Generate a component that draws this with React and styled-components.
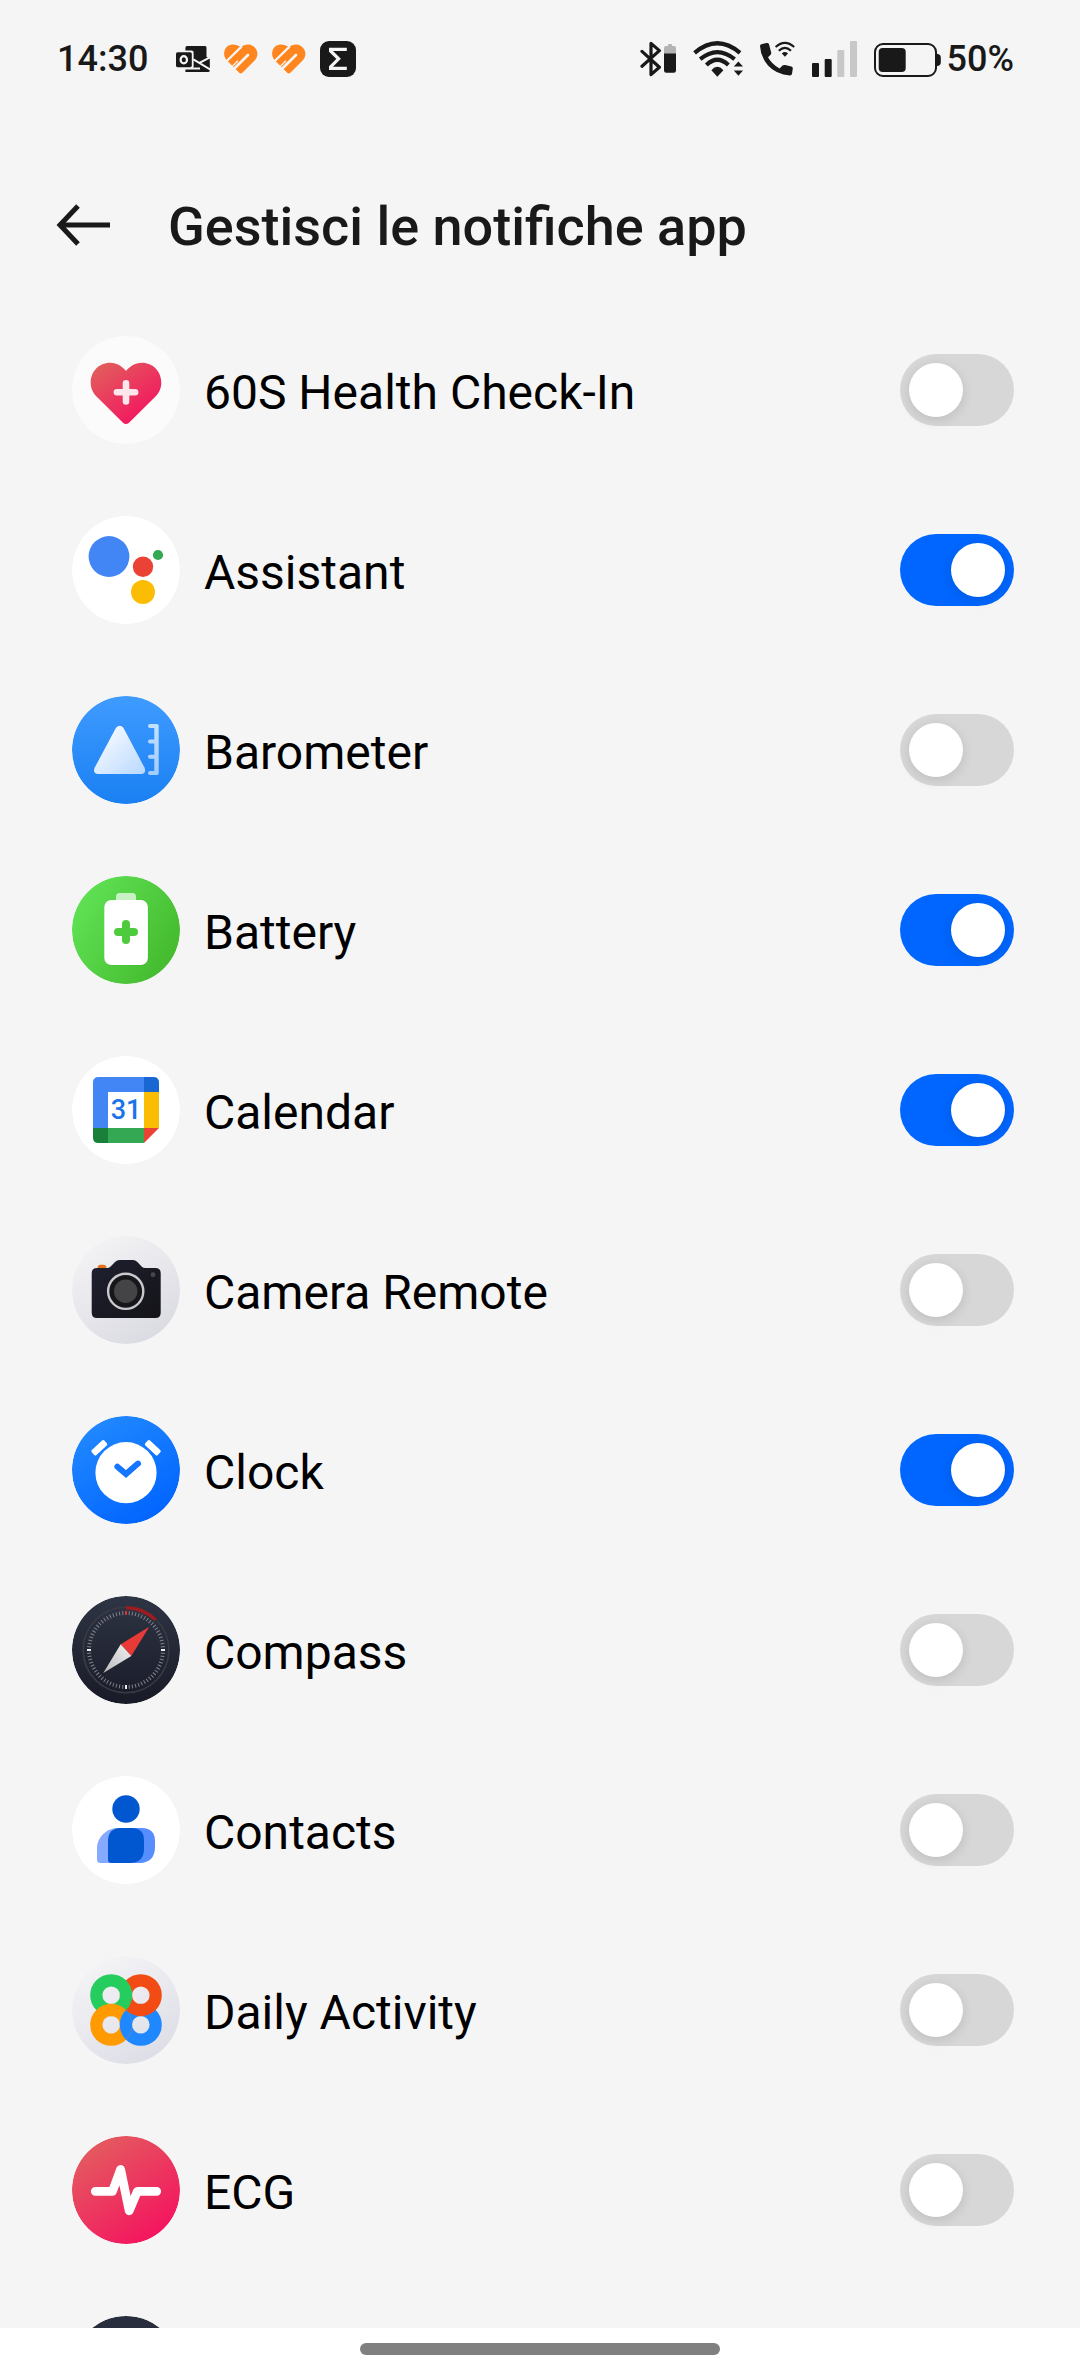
import { useState } from "react"
import styled, { createGlobalStyle } from "styled-components"

const GlobalStyle = createGlobalStyle`
*{
    box-sizing: border-box;
}

body{
    margin: 0;
    background: #f5f5f5;
    font-family: Roboto, "Noto Sans", sans-serif;
}
`

const Screen = styled.div`
height: 100vh;
display: flex;
flex-direction: column;
background: #f5f5f5;
`

const StyledStatusBar = styled.div`
display: flex;
justify-content: space-between;
align-items: center;
height: 118px;
padding: 0 66px 0 57px;
flex-shrink: 0;
color: #191919;
font-size: 36px;
font-weight: 500;
`

const StatusGroup = styled.div`
display: flex;
align-items: center;
gap: ${(props) => props.$gap}px;
`

const StyledHeader = styled.header`
display: flex;
align-items: center;
gap: 58px;
height: 182px;
padding: 32px 56px 0;
flex-shrink: 0;
`

const BackButton = styled.button`
display: flex;
padding: 0;
border: 0;
background: none;
color: #191919;
cursor: pointer;
`

const Title = styled.h1`
margin: 0;
padding-top: 2px;
color: #191919;
font-size: 54px;
font-weight: 500;
`

const AppList = styled.ul`
flex: 1;
min-height: 0;
margin: 0;
padding: 0;
list-style: none;
overflow-y: auto;
scrollbar-width: none;
`

const AppRow = styled.li`
display: flex;
align-items: center;
gap: 24px;
height: 180px;
padding: 0 66px 0 72px;
`

const AppIcon = styled.svg`
width: 108px;
height: 108px;
flex-shrink: 0;
border-radius: 50%;
`

const AppName = styled.label`
flex: 1;
padding-top: 4px;
color: #000;
font-size: 48px;
`

const Switch = styled.input`
appearance: none;
width: 114px;
height: 72px;
margin: 0;
padding: 9px;
flex-shrink: 0;
border-radius: 36px;
background: #d7d7d7;
cursor: pointer;

&::before{
    content: "";
    display: block;
    width: 54px;
    height: 54px;
    border-radius: 50%;
    background: #fff;
    box-shadow: 0 3px 12px rgba(0, 0, 0, 0.12);
}

&:checked{
    background: #0066ff;
}

&:checked::before{
    margin-left: auto;
}
`

const NavBar = styled.div`
display: flex;
justify-content: center;
align-items: center;
height: 48px;
padding-bottom: 6px;
flex-shrink: 0;
background: #fff;
`

const HomeHandle = styled.div`
width: 33.3333%;
height: 12px;
border-radius: 6px;
background: #808080;
`

const OutlookIcon = () => (
    <svg width="34" height="26" viewBox="0 0 34 26">
        <path d="M11 0H29Q30.6 0 30.6 1.6V11L33.8 12.6V24.4Q33.8 26 32 26H9.4V2Q9.4 0 11 0Z" fill="#191919" />
        <path d="M8 22.6H24M17.4 13.4L34.5 23.6M34.5 11L23 17.2" stroke="#f5f5f5" strokeWidth="2" fill="none" />
        <path d="M31.6 0V10.5" stroke="#f5f5f5" strokeWidth="1.6" />
        <rect x="-1" y="4.6" width="18.6" height="17.6" rx="2" fill="#f5f5f5" />
        <rect x="0" y="6.2" width="15.8" height="15" rx="1.6" fill="#191919" />
        <ellipse cx="7.8" cy="13.8" rx="3.2" ry="3.6" fill="none" stroke="#f5f5f5" strokeWidth="2.2" />
    </svg>
)

const HeartIcon = () => (
    <svg width="34" height="30" viewBox="0 0 34 30">
        <path d="M16.8 3.4C20.6 .2 25.2-.2 28.9 2C34 5 35 12 30.6 16.6L18.4 28.8Q16.8 30.2 15.2 28.8L3 16.6C-1.2 12-.8 5 4.2 1.8C8-.2 13 .2 16.8 3.4Z" fill="#ff861f" />
        <path d="M2 17.8L17.8 2.4" stroke="#f5f5f5" strokeWidth="2.2" />
        <path d="M6 24.6L14 16.8" stroke="#f5f5f5" strokeWidth="1.2" />
        <path d="M8.6 26.2L24 11" stroke="#f5f5f5" strokeWidth="2.6" strokeLinecap="round" />
    </svg>
)

const ZeppIcon = () => (
    <svg width="36" height="36" viewBox="0 0 36 36">
        <rect width="36" height="36" rx="9" fill="#191919" />
        <path d="M26.8 8.4H10.6V10L18.6 17.8L10.6 25.8V27.4H26.8" fill="none" stroke="#f5f5f5" strokeWidth="3.2" />
    </svg>
)

const BluetoothIcon = () => (
    <svg width="36" height="36" viewBox="0 0 36 36">
        <path d="M2 10.4L19.4 26.2L11 33.6V2.4L19.4 9.6L2 25.2" fill="none" stroke="#191919" strokeWidth="3.2" strokeLinecap="round" strokeLinejoin="round" />
        <path d="M24 13V7Q24 5 26 5H27.6L28.6 3H31.4L32.4 5H34Q36 5 36 7V13Z" fill="#b3b3b3" />
        <path d="M24 12.6H36V29.5Q36 31.8 33.7 31.8H26.3Q24 31.8 24 29.5Z" fill="#191919" />
    </svg>
)

const WifiIcon = () => (
    <svg width="50" height="36" viewBox="0 0 50 36">
        <g fill="none" stroke="#191919" strokeWidth="4.2">
            <path d="M1.6 11.8Q24.3-7.4 47 11.8" />
            <path d="M7.2 18.2Q24.3 4 41.6 18.2" />
            <path d="M13.4 24Q24.3 13.6 35.4 24" />
        </g>
        <g fill="#191919">
            <path d="M18.4 29.2Q24.3 22.4 30.4 29.2L24.3 35.8Z" />
            <path d="M45.4 20.4L50 25.6H40.8Z" />
            <path d="M45.4 34.8L50 29.4H40.8Z" />
        </g>
    </svg>
)

const WifiCallIcon = () => (
    <svg width="35" height="36" viewBox="0 0 35 36">
        <path d="M1.5 3.2L6.6 2Q8.4 1.7 9 3.3L11.2 11.5Q11.5 13 10.4 14L8 16.3Q11.5 23 19.6 27.6L22.5 24.6Q23.6 23.6 25 24L31.4 25.6Q33 26.2 32.8 27.6L32 32.8Q31.7 34.4 30 34.4Q16 33.5 8 24.5Q.5 15.5 0 5Q0 3.5 1.5 3.2Z" fill="#191919" />
        <path d="M15.6 6Q24.9-2.2 34.2 6M18.8 9.8Q24.9 3.8 31 9.8" fill="none" stroke="#191919" strokeWidth="2.1" />
        <path d="M21.8 12.4Q24.9 9.6 28 12.4L24.9 15.8Z" fill="#191919" />
    </svg>
)

const SignalIcon = () => (
    <svg width="45" height="36" viewBox="0 0 45 36">
        <rect x="0" y="22" width="7" height="14" rx="1" fill="#191919" />
        <rect x="12.7" y="18" width="7" height="18" rx="1" fill="#191919" />
        <rect x="25.3" y="9" width="7" height="27" rx="1" fill="#c8c8c8" />
        <rect x="38" y="0" width="7" height="36" rx="1" fill="#c8c8c8" />
    </svg>
)

const BatteryLevelIcon = () => (
    <svg width="67" height="36" viewBox="0 0 67 36">
        <rect x="1" y="3" width="61" height="32" rx="8" fill="none" stroke="#191919" strokeWidth="2" />
        <rect x="4.7" y="7" width="27" height="24" rx="4" fill="#191919" />
        <path d="M63 12.8Q66.8 13.4 66.8 16.4V21.4Q66.8 24.4 63 25Z" fill="#191919" />
    </svg>
)

const HealthIcon = () => (
    <AppIcon viewBox="0 0 108 108" aria-hidden="true">
        <defs>
            <linearGradient id="heartFill" x1="0" y1="0" x2="0.8" y2="1">
                <stop offset="0" stopColor="#e0645c" />
                <stop offset="0.8" stopColor="#f0205f" />
                <stop offset="1" stopColor="#f5145f" />
            </linearGradient>
        </defs>
        <circle cx="54" cy="54" r="54" fill="#fbfbfb" />
        <path d="M54 35C49.5 29.5 44 26.7 38 26.7C27 26.7 18.7 35.5 18.7 46.5C18.7 52.5 21 57 25 61L51 86.8Q54 89.4 57 86.8L83 61C87 57 89.3 52.5 89.3 46.5C89.3 35.5 81 26.7 70 26.7C64 26.7 58.5 29.5 54 35Z" fill="url(#heartFill)" />
        <path d="M54 47.2V65.4M44.9 56.3H63.1" stroke="#fde6ec" strokeWidth="6.6" strokeLinecap="round" />
    </AppIcon>
)

const AssistantIcon = () => (
    <AppIcon viewBox="0 0 108 108" aria-hidden="true">
        <circle cx="54" cy="54" r="54" fill="#fff" />
        <circle cx="37" cy="40.5" r="20.4" fill="#4285f4" />
        <circle cx="71" cy="50.7" r="10.2" fill="#ea4335" />
        <circle cx="86" cy="39" r="5.1" fill="#34a853" />
        <circle cx="71" cy="76" r="12" fill="#fbbc04" />
    </AppIcon>
)

const BarometerIcon = () => (
    <AppIcon viewBox="0 0 108 108" aria-hidden="true">
        <defs>
            <linearGradient id="sky" x1="0" y1="0" x2="0" y2="1">
                <stop offset="0" stopColor="#3f9bff" />
                <stop offset="1" stopColor="#1a80f3" />
            </linearGradient>
            <linearGradient id="peak" x1="0" y1="0" x2="1" y2="1">
                <stop offset="0.2" stopColor="#f2f8ff" />
                <stop offset="1" stopColor="#b8d8ff" />
            </linearGradient>
            <linearGradient id="scale" x1="0" y1="0" x2="0" y2="1">
                <stop offset="0" stopColor="#c4e0ff" />
                <stop offset="1" stopColor="#a2cdff" />
            </linearGradient>
        </defs>
        <circle cx="54" cy="54" r="54" fill="url(#sky)" />
        <path d="M44 31.8Q47.7 27.6 51.4 31.8L72.6 71.8Q74.6 77.4 69 78H26.2Q20.6 77.4 22.6 71.8Z" fill="url(#peak)" />
        <path d="M78 28H85Q86.7 28 86.7 29.7V77.3Q86.7 79 85 79H78A2 2 0 0 1 78 75H82.3V62.7H78A2 2 0 0 1 78 58.7H82.3V47.4H78A2 2 0 0 1 78 43.4H82.3V32H78A2 2 0 0 1 78 28Z" fill="url(#scale)" />
    </AppIcon>
)

const BatteryIcon = () => (
    <AppIcon viewBox="0 0 108 108" aria-hidden="true">
        <defs>
            <linearGradient id="grass" x1="0" y1="0.2" x2="1" y2="0.8">
                <stop offset="0" stopColor="#61e356" />
                <stop offset="1" stopColor="#43b82c" />
            </linearGradient>
        </defs>
        <circle cx="54" cy="54" r="54" fill="url(#grass)" />
        <path d="M44 25V20.6Q44 17 47.6 17H60.4Q64 17 64 20.6V25Z" fill="#c9f2c4" />
        <rect x="32.8" y="25" width="43.6" height="65" rx="7" fill="#2f9a20" opacity="0.18" />
        <rect x="32.3" y="24" width="43.6" height="65" rx="7" fill="#fff" />
        <path d="M54 48V64M46 56H62" stroke="#4ecb3d" strokeWidth="8" strokeLinecap="round" />
    </AppIcon>
)

const CalendarDay = styled.text`
font-size: 27px;
font-weight: 500;
`

const CalendarIcon = () => (
    <AppIcon viewBox="0 0 108 108" aria-hidden="true">
        <circle cx="54" cy="54" r="54" fill="#fff" />
        <path d="M72 21H26.5Q21 21 21 26.5V72H36V36H72Z" fill="#4285f4" />
        <path d="M72 21H81.5Q87 21 87 26.5V36H72Z" fill="#1967d2" />
        <path d="M72 36H87V72H72Z" fill="#fbbc04" />
        <path d="M36 72H72V87H36Z" fill="#34a853" />
        <path d="M21 72H36V87H26.5Q21 87 21 81.5Z" fill="#188038" />
        <path d="M72 72H87L72 87Z" fill="#ea4335" />
        <CalendarDay x="54" y="63" textAnchor="middle" fill="#1a73e8">31</CalendarDay>
    </AppIcon>
)

const CameraIcon = () => (
    <AppIcon viewBox="0 0 108 108" aria-hidden="true">
        <defs>
            <linearGradient id="silver" x1="0.2" y1="0" x2="0.8" y2="1">
                <stop offset="0" stopColor="#f4f4f6" />
                <stop offset="1" stopColor="#d9d9e1" />
            </linearGradient>
            <linearGradient id="cameraBody" x1="0" y1="0" x2="1" y2="1">
                <stop offset="0" stopColor="#1f2030" />
                <stop offset="1" stopColor="#141418" />
            </linearGradient>
        </defs>
        <circle cx="54" cy="54" r="54" fill="url(#silver)" />
        <path d="M25.7 33V31.4Q25.7 28.7 28.6 28.7H31.4Q34.3 28.7 34.3 31.4V33Z" fill="#e8701a" />
        <path d="M25 32H35Q37 32 38.6 30.4L43 26Q45 24 47.6 24H61Q63.4 24 65.4 26L69.6 30.4Q71.2 32 73.4 32H83.4Q88.7 32 88.7 37.3V76.7Q88.7 82 83.4 82H25Q19.7 82 19.7 76.7V37.3Q19.7 32 25 32Z" fill="url(#cameraBody)" />
        <circle cx="53.7" cy="55.3" r="17.6" fill="#17171b" stroke="#c9c9cd" strokeWidth="2.4" />
        <circle cx="53.7" cy="55.3" r="11.7" fill="#444446" />
        <circle cx="81" cy="38.7" r="2.4" fill="#48484c" />
    </AppIcon>
)

const ClockIcon = () => (
    <AppIcon viewBox="0 0 108 108" aria-hidden="true">
        <defs>
            <linearGradient id="azure" x1="0.2" y1="0" x2="0.8" y2="1">
                <stop offset="0" stopColor="#228aff" />
                <stop offset="1" stopColor="#0062ff" />
            </linearGradient>
        </defs>
        <circle cx="54" cy="54" r="54" fill="url(#azure)" />
        <circle cx="54" cy="56.7" r="30.6" fill="#fff" />
        <rect x="18.7" y="28.3" width="17.2" height="6.8" rx="1.6" transform="rotate(-43 27.3 31.7)" fill="#fff" />
        <rect x="72.2" y="28.3" width="17.2" height="6.8" rx="1.6" transform="rotate(43 80.8 31.7)" fill="#fff" />
        <path d="M45.4 50.8L54 58L66 47.6" fill="none" stroke="#1475ff" strokeWidth="6" strokeLinecap="round" />
    </AppIcon>
)

const compassTicks = Array.from({ length: 72 }, (_, i) => i * 5)

const CompassIcon = () => (
    <AppIcon viewBox="0 0 108 108" aria-hidden="true">
        <defs>
            <linearGradient id="night" x1="0" y1="0" x2="0" y2="1">
                <stop offset="0" stopColor="#2e3544" />
                <stop offset="1" stopColor="#191a28" />
            </linearGradient>
            <linearGradient id="needle" x1="1" y1="0" x2="0" y2="1">
                <stop offset="0" stopColor="#f2f2f2" />
                <stop offset="1" stopColor="#b9b9bd" />
            </linearGradient>
        </defs>
        <circle cx="54" cy="54" r="54" fill="url(#night)" />
        <circle cx="54" cy="54" r="42.8" fill="none" stroke="#3a3b43" strokeWidth="1.6" />
        {compassTicks.map((angle) => (
            <line
                key={angle}
                x1="54"
                y1="15"
                x2="54"
                y2="19"
                transform={`rotate(${angle} 54 54)`}
                stroke={angle === 0 ? "#e03030" : angle % 90 === 0 ? "#f0f0f0" : "#80828c"}
                strokeWidth={angle % 90 === 0 ? 2 : 1}
            />
        ))}
        <path d="M54 11.8A42.2 42.2 0 0 1 83.4 23.8" fill="none" stroke="#9c1c22" strokeWidth="3.4" />
        <path d="M77.3 30.7L48.7 48.3L59.3 60Z" fill="#e83a36" />
        <path d="M31.3 77L48.7 48.3L59.3 60Z" fill="url(#needle)" />
    </AppIcon>
)

const ContactsIcon = () => (
    <AppIcon viewBox="0 0 108 108" aria-hidden="true">
        <circle cx="54" cy="54" r="54" fill="#fff" />
        <circle cx="54" cy="33" r="13.7" fill="#0057d0" />
        <path d="M60 52H46C34 52 25 62 25 72V83.5Q25 87 28.5 87H60Z" fill="#86aaff" />
        <path d="M54 52H70Q83 52.6 83 65V72Q82.4 86.4 68 87H54Z" fill="#568dff" />
        <path d="M48 52H60Q72 52.6 72 64V74Q71.4 86.4 58 87H39.5Q36 87 36 83.5V64Q36.6 52.6 48 52Z" fill="#0057d0" />
    </AppIcon>
)

const ActivityIcon = () => (
    <AppIcon viewBox="0 0 108 108" aria-hidden="true">
        <defs>
            <linearGradient id="mist" x1="0.2" y1="0" x2="0.8" y2="1">
                <stop offset="0" stopColor="#f5f5f7" />
                <stop offset="1" stopColor="#dcdce6" />
            </linearGradient>
            <clipPath id="orangeDisc">
                <circle cx="39.2" cy="68.8" r="21" />
            </clipPath>
        </defs>
        <circle cx="54" cy="54" r="54" fill="url(#mist)" />
        <g fill="none" strokeWidth="12.2">
            <circle cx="68.8" cy="68.8" r="14.9" stroke="#1f88ff" />
            <circle cx="68.8" cy="39.2" r="14.9" stroke="#f24c14" />
            <circle cx="39.2" cy="39.2" r="14.9" stroke="#24cd5d" />
            <circle cx="39.2" cy="68.8" r="14.9" stroke="#ff9a00" />
            {/* the blue ring passes over the orange one to close the knot */}
            <circle cx="68.8" cy="68.8" r="14.9" stroke="#1f88ff" clipPath="url(#orangeDisc)" />
        </g>
    </AppIcon>
)

const EcgIcon = () => (
    <AppIcon viewBox="0 0 108 108" aria-hidden="true">
        <defs>
            <linearGradient id="coral" x1="0.1" y1="0" x2="0.8" y2="1">
                <stop offset="0" stopColor="#e2625f" />
                <stop offset="1" stopColor="#f5105f" />
            </linearGradient>
        </defs>
        <circle cx="54" cy="54" r="54" fill="url(#coral)" />
        <path d="M23.3 55.3H40.5L48.6 33.4L57.2 74.8L65.4 55.3H84.7" fill="none" stroke="#fff" strokeWidth="8.8" strokeLinecap="round" strokeLinejoin="round" />
    </AppIcon>
)

const NightIcon = () => (
    <AppIcon viewBox="0 0 108 108" aria-hidden="true">
        <circle cx="54" cy="54" r="54" fill="#282e3d" />
    </AppIcon>
)

const apps = [
    { id: "health", name: "60S Health Check-In", Icon: HealthIcon, enabled: false },
    { id: "assistant", name: "Assistant", Icon: AssistantIcon, enabled: true },
    { id: "barometer", name: "Barometer", Icon: BarometerIcon, enabled: false },
    { id: "battery", name: "Battery", Icon: BatteryIcon, enabled: true },
    { id: "calendar", name: "Calendar", Icon: CalendarIcon, enabled: true },
    { id: "camera", name: "Camera Remote", Icon: CameraIcon, enabled: false },
    { id: "clock", name: "Clock", Icon: ClockIcon, enabled: true },
    { id: "compass", name: "Compass", Icon: CompassIcon, enabled: false },
    { id: "contacts", name: "Contacts", Icon: ContactsIcon, enabled: false },
    { id: "activity", name: "Daily Activity", Icon: ActivityIcon, enabled: false },
    { id: "ecg", name: "ECG", Icon: EcgIcon, enabled: false },
]

const StatusBar = () => (
    <StyledStatusBar>
        <StatusGroup $gap={28}>
            <span>14:30</span>
            <StatusGroup $gap={14}>
                <OutlookIcon />
                <HeartIcon />
                <HeartIcon />
                <ZeppIcon />
            </StatusGroup>
        </StatusGroup>
        <StatusGroup $gap={17}>
            <BluetoothIcon />
            <WifiIcon />
            <WifiCallIcon />
            <SignalIcon />
            <StatusGroup $gap={6}>
                <BatteryLevelIcon />
                <span>50%</span>
            </StatusGroup>
        </StatusGroup>
    </StyledStatusBar>
)

const Header = (props) => {
    const { headerText } = props

    return (
        <StyledHeader>
            <BackButton type="button" aria-label="Indietro">
                <svg width="54" height="42" viewBox="0 0 54 42" fill="none" stroke="currentColor" strokeWidth="5">
                    <path d="M22 2L4 21L22 40" />
                    <path d="M4 21H54" />
                </svg>
            </BackButton>
            <Title>{headerText}</Title>
        </StyledHeader>
    )
}

const NotificationRow = (props) => {
    const { id, name, Icon, defaultEnabled } = props
    const [enabled, setEnabled] = useState(defaultEnabled)

    return (
        <AppRow>
            <Icon />
            <AppName htmlFor={id}>{name}</AppName>
            <Switch id={id} type="checkbox" role="switch" checked={enabled} onChange={() => setEnabled(!enabled)} />
        </AppRow>
    )
}

const App = () => {
    return (
        <Screen>
            <GlobalStyle />
            <StatusBar />
            <Header headerText="Gestisci le notifiche app" />
            <AppList>
                {apps.map(({ id, name, Icon, enabled }) => (
                    <NotificationRow key={id} id={id} name={name} Icon={Icon} defaultEnabled={enabled} />
                ))}
                <AppRow>
                    <NightIcon />
                </AppRow>
            </AppList>
            <NavBar>
                <HomeHandle />
            </NavBar>
        </Screen>
    )
}

export default App
